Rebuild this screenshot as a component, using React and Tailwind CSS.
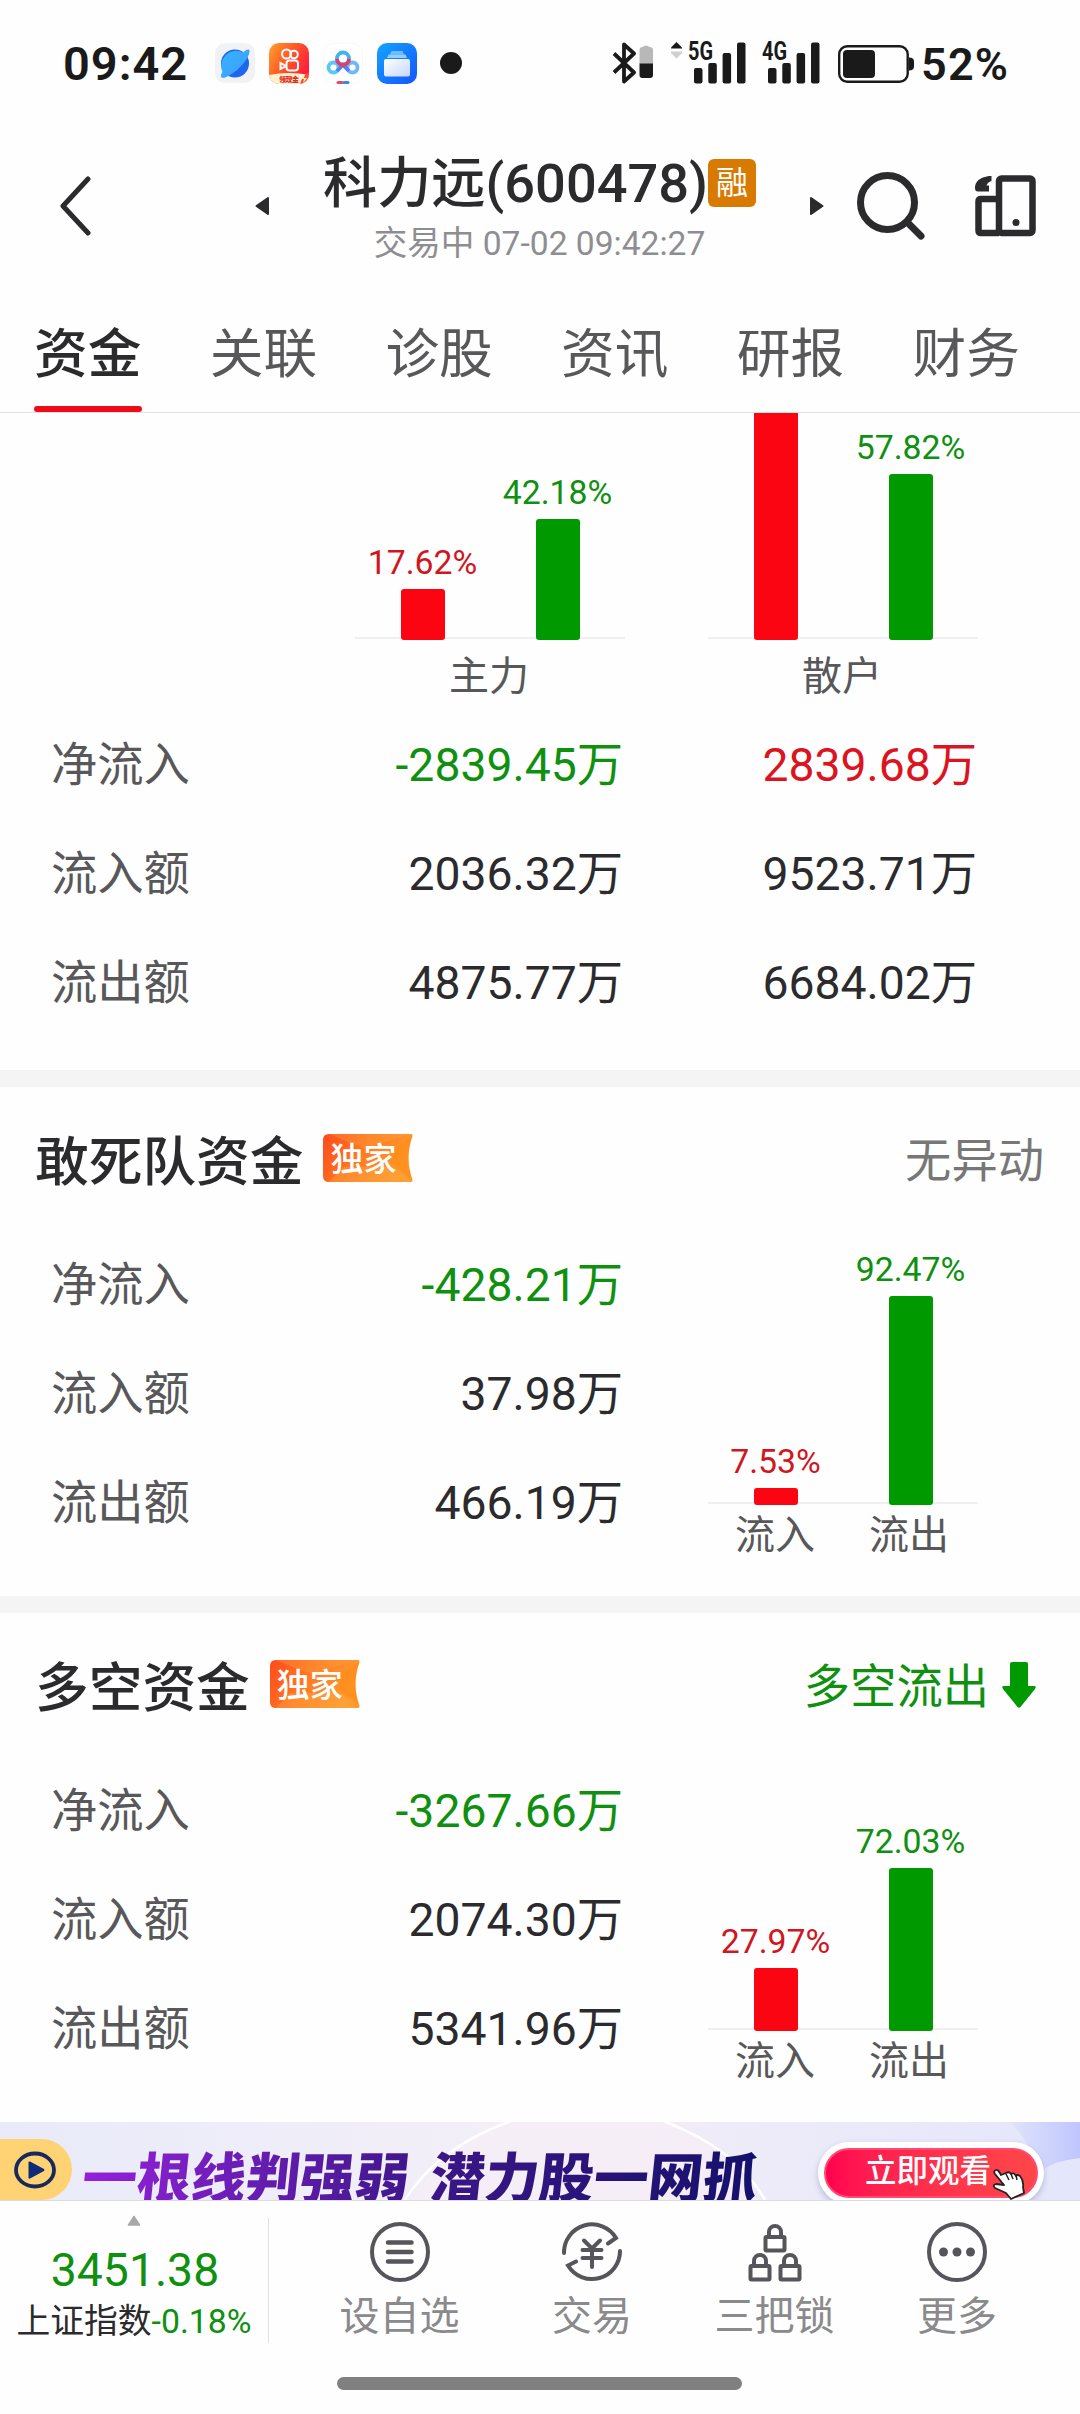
import clsx from "clsx";

const tabs = ["资金", "关联", "诊股", "资讯", "研报", "财务"];

const mainRows = [
  { label: "净流入", main: "-2839.45万", retail: "2839.68万" },
  { label: "流入额", main: "2036.32万", retail: "9523.71万" },
  { label: "流出额", main: "4875.77万", retail: "6684.02万" },
];

const squadRows = [
  { label: "净流入", value: "-428.21万" },
  { label: "流入额", value: "37.98万" },
  { label: "流出额", value: "466.19万" },
];

const longShortRows = [
  { label: "净流入", value: "-3267.66万" },
  { label: "流入额", value: "2074.30万" },
  { label: "流出额", value: "5341.96万" },
];

const SignalBars = ({ x }) => (
  <g fill="#1a1a1a">
    <rect x={x} y="26" width="8.5" height="15.5" rx="2" />
    <rect x={x + 14.3} y="21" width="8.5" height="20.5" rx="2" />
    <rect x={x + 28.6} y="11" width="8.5" height="30.5" rx="2" />
    <rect x={x + 43} y="0.5" width="8.5" height="41" rx="2" />
  </g>
);

const StatusBar = () => {
  return (
    <div className="h-[126px] flex items-center pl-[63px] text-[#1a1a1a] font-semibold">
      <span className="w-[152px] text-[47px] leading-none tracking-[1px]">09:42</span>
      <div className="flex items-center gap-[14px]">
        {/* browser */}
        <svg width="40" height="40" viewBox="0 0 40 40">
          <defs>
            <linearGradient id="planet" x1="0" y1="0" x2="1" y2="1">
              <stop offset="0" stopColor="#35b4ff" />
              <stop offset="1" stopColor="#3f9bff" />
            </linearGradient>
          </defs>
          <rect width="40" height="40" rx="10" fill="#f1f2f4" />
          <circle cx="20" cy="20.500" r="14" fill="#1f66ee" />
          <path
            d="M28 9.500C31 7 34 5.500 34.500 7.500C35 12 30 20 22 27c-6 5-13 9-15.500 7.500C5.500 33 6 31 7.500 29A15 15 0 0 1 28 9.500Z"
            fill="url(#planet)"
          />
        </svg>
        {/* short video */}
        <svg width="40" height="41" viewBox="0 0 40 41">
          <defs>
            <linearGradient id="ks" x1="0" y1="0" x2="1" y2="0.6">
              <stop offset="0" stopColor="#ffa22a" />
              <stop offset="0.5" stopColor="#ff5a26" />
              <stop offset="1" stopColor="#ff1c3c" />
            </linearGradient>
            <clipPath id="ksClip">
              <rect width="40" height="41" rx="10" />
            </clipPath>
          </defs>
          <g clipPath="url(#ksClip)">
            <rect width="40" height="41" fill="url(#ks)" />
            <path d="M0 32Q20 28 40 32V41H0Z" fill="#fff0cf" />
            <path d="M40 29V41H31Q33 33 40 29Z" fill="#ff4a28" />
          </g>
          <g fill="none" stroke="#fff" strokeWidth="2">
            <circle cx="17.500" cy="11" r="4.500" />
            <circle cx="25" cy="11.500" r="3.800" />
            <rect x="17.500" y="17.500" width="11.500" height="10" rx="3" />
            <path d="M11.500 20v6l5-2.500v-1Z" />
          </g>
          <text x="10" y="38.500" fontSize="7" fontWeight="900" fill="#e02a1a" textLength="20">
            领现金
          </text>
          <path d="M36 31l-4 5h3l-1 4 4-5h-3Z" fill="#fff3b0" />
        </svg>
        {/* cloud drive */}
        <svg width="40" height="41" viewBox="0 0 40 41" fill="none" strokeWidth="3.800">
          <rect x="0.500" y="0.500" width="39" height="40" rx="10" fill="#fff" stroke="#f8f8f8" strokeWidth="1" />
          <circle cx="10.500" cy="24.500" r="5" stroke="#58c8f5" />
          <circle cx="29.500" cy="24.500" r="5" stroke="#72b6f6" />
          <path d="M14 28l6-6 6 6" stroke="#4a86ee" />
          <circle cx="20" cy="15.500" r="6" stroke="#3db4f0" />
          <path d="M14 16a6 6 0 0 0 12 0" stroke="#e83a6c" />
          <rect x="13.500" y="38" width="7" height="3" rx="1.500" fill="#e84a60" />
          <rect x="19.500" y="38" width="7" height="3" rx="1.500" fill="#3a8ae0" />
        </svg>
        {/* wallet */}
        <svg width="40" height="41" viewBox="0 0 40 41">
          <defs>
            <linearGradient id="wal" x1="0" y1="0" x2="1" y2="1">
              <stop offset="0" stopColor="#12a4ff" />
              <stop offset="1" stopColor="#1554ff" />
            </linearGradient>
            <linearGradient id="card" x1="0" y1="0" x2="1" y2="1">
              <stop offset="0" stopColor="#fff" />
              <stop offset="1" stopColor="#c8d6ff" />
            </linearGradient>
          </defs>
          <rect width="40" height="41" rx="10" fill="url(#wal)" />
          <path d="M14.500 8h11l1.500 3.500H13Z" fill="#6cc0ff" />
          <path d="M11.500 11.500h17l1.500 3.500H10Z" fill="#92ceff" />
          <rect x="7" y="16" width="26" height="17.500" rx="2" fill="url(#card)" />
        </svg>
      </div>
      <div className="ml-[23px] w-[22px] h-[22px] rounded-full bg-[#1a1a1a]" />

      {/* bluetooth with device battery */}
      <svg className="ml-[150px]" width="42" height="42" viewBox="0 0 42 42">
        <path
          d="M2 11.500 22 30.500 12 39.500V2.500L22 11.500 2 30.500"
          fill="none"
          stroke="#1a1a1a"
          strokeWidth="3.800"
          strokeLinejoin="round"
        />
        <path d="M27.500 8q0-3 3-3l2-1.200h3l2 1.200q3.500 0 3.500 3v14H27.500Z" fill="#b8b8b8" />
        <path d="M27.500 21.500H41V33q0 3-3 3h-7.500q-3 0-3-3Z" fill="#1a1a1a" />
      </svg>
      <svg className="ml-[16px] overflow-visible" width="76" height="42" viewBox="0 0 76 42">
        <path d="M6.500 0 12 5.500V6.500H1V5.500Z" fill="#1a1a1a" />
        <path d="M6.500 16.500 12 11V9.500H1V11Z" fill="#cfcfcf" />
        <text x="18" y="17.800" fontSize="25" fontWeight="700" fill="#1a1a1a" textLength="25" lengthAdjust="spacingAndGlyphs">
          5G
        </text>
        <SignalBars x={24} />
      </svg>
      <svg className="ml-[15px] overflow-visible" width="60" height="42" viewBox="0 0 60 42">
        <text x="1" y="17.800" fontSize="25" fontWeight="700" fill="#1a1a1a" textLength="25" lengthAdjust="spacingAndGlyphs">
          4G
        </text>
        <SignalBars x={7} />
      </svg>
      <svg className="ml-[17px] mt-[2px]" width="76" height="38" viewBox="0 0 76 38">
        <rect x="1.200" y="1.200" width="68.500" height="35.500" rx="8" fill="none" stroke="#1a1a1a" strokeWidth="2.400" />
        <rect x="5" y="5" width="32" height="28" rx="4" fill="#1a1a1a" />
        <path d="M71 12.500q5 0 5 4v5q0 4-5 4Z" fill="#1a1a1a" />
      </svg>
      <span className="ml-[7px] mt-[2px] text-[45px] leading-none tracking-[1.2px]">52%</span>
    </div>
  );
};

const Header = () => {
  return (
    <div className="h-[159px] flex items-center text-[#2b2b2d]">
      <svg className="ml-[59px]" width="32" height="60" viewBox="0 0 32 60">
        <path d="M29 3 4 30 29 57" fill="none" stroke="currentColor" strokeWidth="5" strokeLinecap="round" strokeLinejoin="round" />
      </svg>
      <svg className="ml-[164px]" width="14" height="20" viewBox="0 0 14 20">
        <path d="M13 2v16L1.500 10Z" fill="currentColor" stroke="currentColor" strokeWidth="2" strokeLinejoin="round" />
      </svg>
      <div className="w-[541px] h-full pt-[27px]">
        <div className="h-[61px] flex items-center justify-center">
          <span className="text-[54.2px] leading-[60px] font-medium">科力远(600478)</span>
          <span className="-mt-[2px] w-[48px] h-[48px] rounded-[6px] bg-[#d87a00] text-white text-[32px] leading-[49px] text-center">
            融
          </span>
        </div>
        <div className="text-[33.6px] leading-[60px] text-center text-[#8e8e92]">
          交易中 07-02 09:42:27
        </div>
      </div>
      <svg width="14" height="20" viewBox="0 0 14 20">
        <path d="M1 2v16L12.500 10Z" fill="currentColor" stroke="currentColor" strokeWidth="2" strokeLinejoin="round" />
      </svg>
      <svg className="ml-[33px]" width="68" height="68" viewBox="0 0 68 68" fill="none" stroke="currentColor" strokeWidth="7">
        <circle cx="30.500" cy="30.500" r="27" />
        <path d="M51 51 64 64" strokeLinecap="round" />
      </svg>
      <svg className="ml-[50px]" width="62" height="62" viewBox="0 0 62 62" fill="none" stroke="currentColor" strokeWidth="6.500">
        <rect x="24" y="3.500" width="33.500" height="54.500" rx="2.500" />
        <path d="M24 24H6q-2.500 0-2.500 2.500V55.500q0 2.500 2.500 2.500H24" />
        <circle cx="41" cy="47.500" r="3.500" fill="currentColor" stroke="none" />
        <path d="M14 1h2.500v5q-4 1-5 4.500h2.500v6H3q-3 0-3-3.500Q0 3 14 1Z" fill="currentColor" stroke="none" />
      </svg>
    </div>
  );
};

const Bar = ({ percent, scale, up, bare }) => (
  <div className="flex flex-col items-center justify-end">
    {!bare && (
      <span
        className={clsx(
          "text-[33.8px] leading-[34px] mb-[9px] whitespace-nowrap",
          up ? "text-[#d0161f]" : "text-[#0f900f]"
        )}
      >
        {percent.toFixed(2)}%
      </span>
    )}
    <div
      className={clsx("w-[44px] rounded-[3px] shrink-0", up ? "bg-[#fa0511]" : "bg-[#009900]")}
      style={{ height: Math.round(percent * scale) }}
    />
  </div>
);

// tall bars run out of the top edge, so the pair hangs from its base line
const BarPair = ({ inflow, outflow, scale, bare, className }) => (
  <div className={clsx("w-[270px] relative flex items-end overflow-hidden", className)}>
    <div className="absolute bottom-px w-full h-[2px] bg-[#efefef]" />
    <div className="relative w-full grid grid-cols-2">
      <Bar percent={inflow} scale={scale} up bare={bare} />
      <Bar percent={outflow} scale={scale} />
    </div>
  </div>
);

const MainFunds = () => {
  return (
    <section className="h-[657px]">
      <div className="flex pl-[355px] gap-[83px]">
        <div>
          <BarPair inflow={17.62} outflow={42.18} scale={2.87} className="h-[227px]" />
          <div className="h-[71px] pt-[3px] pr-[2px] text-center text-[40px] leading-[68px] text-[#58585a]">主力</div>
        </div>
        <div>
          <BarPair inflow={82.38} outflow={57.82} scale={2.87} bare className="h-[227px]" />
          <div className="h-[71px] pt-[3px] pr-[2px] text-center text-[40px] leading-[68px] text-[#58585a]">散户</div>
        </div>
      </div>
      {mainRows.map((row, i) => (
        <div key={row.label} className="flex pl-[51px] text-[46.3px] leading-[109px] text-[#2b2b2d]">
          <span className="w-[141px] text-[#58585a]">{row.label}</span>
          <span className={clsx("w-[431px] text-right", i === 0 && "text-[#0f900f]")}>{row.main}</span>
          <span className={clsx("w-[354px] text-right", i === 0 && "text-[#dc141f]")}>{row.retail}</span>
        </div>
      ))}
    </section>
  );
};

const ExclusiveTag = () => (
  <div className="relative ml-[20px] -mt-[9px] w-[90px] h-[48px]">
    <svg className="absolute inset-0" width="90" height="48" viewBox="0 0 90 48">
      <defs>
        <linearGradient id="tag" x1="0" y1="0" x2="1" y2="0.3">
          <stop offset="0" stopColor="#ff4a1c" />
          <stop offset="0.5" stopColor="#ff7a22" />
          <stop offset="1" stopColor="#ff9a2e" />
        </linearGradient>
      </defs>
      <path d="M6 0H88q2 0 1.500 2-8 22 0 44 .5 2-1.500 2H6q-6 0-6-6V6Q0 0 6 0Z" fill="url(#tag)" />
      <path d="M6 0H88L62 8 45 16 30 10Z" fill="#ffa040" opacity="0.350" />
      <path d="M89.500 2q-8 22 0 44L70 30V16Z" fill="#ff8a10" opacity="0.500" />
      <path d="M6 48H88L70 33H20Z" fill="#ffab48" opacity="0.350" />
    </svg>
    <span className="relative block pl-[7px] text-[33px] leading-[51px] font-medium text-white">独家</span>
  </div>
);

const FundSection = ({ title, status, rows, inflow, outflow }) => {
  return (
    <section className="border-t-[17px] border-[#f4f4f4] h-[526px]">
      <div className="h-[143px] pt-[8px] pl-[35px] pr-[36px] flex items-center">
        <h2 className="text-[53.7px] leading-[56px] font-medium text-[#2b2b2d]">{title}</h2>
        <ExclusiveTag />
        <div className="ml-auto -mt-[2px] text-[46.3px] leading-none">{status}</div>
      </div>
      <div className="flex pl-[51px]">
        <div className="w-[572px] pt-px text-[46.3px] leading-[109px] text-[#2b2b2d]">
          {rows.map((row, i) => (
            <div key={row.label} className="flex justify-between">
              <span className="text-[#58585a]">{row.label}</span>
              <span className={clsx(i === 0 && "text-[#0f900f]")}>{row.value}</span>
            </div>
          ))}
        </div>
        <div className="ml-[85px]">
          <BarPair inflow={inflow} outflow={outflow} scale={2.26} className="h-[275px]" />
          <div className="grid grid-cols-2 pt-[10px] pr-[2px] text-center text-[40px] leading-[42px] text-[#58585a]">
            <span>流入</span>
            <span>流出</span>
          </div>
        </div>
      </div>
    </section>
  );
};

const PromoBanner = () => {
  return (
    <div className="relative h-[79px] border-b border-[#dcdcde] overflow-hidden flex bg-linear-to-r from-[#e9ebfa] via-[#f4eff7] to-[#e4e6fb]">
      <svg className="absolute inset-0" width="1080" height="78" viewBox="0 0 1080 78" fill="none">
        <defs>
          <linearGradient id="swoosh" x1="0" y1="0" x2="1" y2="0">
            <stop offset="0" stopColor="#dfe3fc" />
            <stop offset="1" stopColor="#c0c6fd" />
          </linearGradient>
        </defs>
        <circle cx="585" cy="180" r="200" fill="#f7eef5" opacity="0.700" />
        <path d="M405 78Q440 22 520 -4M655 -4Q735 24 765 78" stroke="#fff" strokeWidth="2.500" />
        <path d="M1010 0H1080V36Q1055 38 1040 50 1030 20 1010 0Z" fill="url(#swoosh)" />
      </svg>
      <div className="relative mt-[17px] w-[72px] h-[61px] rounded-r-full bg-[#ffd374] flex items-center pl-[14px]">
        <svg width="42" height="38" viewBox="0 0 42 38">
          <ellipse cx="21" cy="19" rx="19" ry="16.500" fill="none" stroke="#16295c" strokeWidth="3.800" />
          <path d="M14.500 11.500v15q0 1.500 1.500 1L30 20q1-1 0-2L16 10.500q-1.500-.5-1.500 1Z" fill="#0f2a78" />
        </svg>
      </div>
      <div className="relative ml-[10px] mt-[22px] h-[80px] w-[690px] whitespace-nowrap text-[54.500px] leading-[70px] font-black text-transparent bg-clip-text bg-linear-to-r from-[#9420dc] via-[#3c1688] to-[#12106a] -skew-x-6">
        一根线判强弱<span className="inline-block w-[21px]" />潜力股一网抓
      </div>
      <div className="absolute left-[818px] top-[20px] w-[226px] h-[62px] rounded-full bg-white p-[6px] shadow-[0_3px_6px_#b8b8d8]">
        <div className="h-[50px] rounded-full border-2 border-[#ff4a72] bg-linear-to-r from-[#ff0050] to-[#ff4648] pl-[39px] text-[31.500px] leading-[43px] font-medium text-white">
          立即观看
        </div>
        <svg className="absolute left-[174px] top-[26px]" width="36" height="34" viewBox="0 0 36 34">
          <path
            d="M4 2q-3 1-1 4l9 11-8-1q-4 1-1 4l11 5 5 6 13-6-1-6q1-6-3-11-3-2-4 0-2-4-5-2-2-3-5-1L9 7Q6 1 4 2Z"
            fill="#fff"
            stroke="#222"
            strokeWidth="1.800"
            strokeLinejoin="round"
          />
          <path d="M14 6l3 6M19 6l2 5M24 7l1 5" stroke="#222" strokeWidth="1.500" />
        </svg>
      </div>
    </div>
  );
};

const Lock = ({ x, y }) => (
  <g transform={`translate(${x} ${y})`}>
    <rect x="2" y="13" width="19" height="13.500" rx="1" />
    <path d="M5.500 13V8a6 6 0 0 1 12 0V13" />
  </g>
);

const actions = [
  {
    label: "设自选",
    width: "w-[193px]",
    icon: (
      <>
        <circle cx="30" cy="30" r="28" />
        <path d="M18 20.500H41.500M18 30H41.500M18 39.500H41.500" strokeWidth="4.500" />
      </>
    ),
  },
  {
    label: "交易",
    width: "w-[192px]",
    icon: (
      <>
        <path d="M2 31A28 28 0 0 1 54 16L46 21.500" />
        <path d="M58 29A28 28 0 0 1 6 43.500L14 39.500" />
        <path d="M22 18.500 30 26.500 38 18.500M30 26.500V45M20.500 28H39.500M20.500 36H39.500" />
      </>
    ),
  },
  {
    label: "三把锁",
    width: "w-[173px]",
    icon: (
      <>
        <Lock x={18.500} y={2} />
        <Lock x={3.500} y={31} />
        <Lock x={33.500} y={31} />
      </>
    ),
  },
  {
    label: "更多",
    width: "w-[192px]",
    icon: (
      <>
        <circle cx="30" cy="30" r="28" />
        <g fill="currentColor" stroke="none">
          <circle cx="16.500" cy="30" r="4.500" />
          <circle cx="30" cy="30" r="4.500" />
          <circle cx="43.500" cy="30" r="4.500" />
        </g>
      </>
    ),
  },
];

const BottomBar = () => {
  return (
    <div className="h-[213px]">
      <div className="flex h-[176px]">
        <div className="w-[268px] flex flex-col items-center pt-[14px]">
          <svg width="14" height="11" viewBox="0 0 14 11">
            <path d="M7 1.500 12.500 10H1.500Z" fill="#a8a8aa" stroke="#a8a8aa" strokeWidth="1.500" strokeLinejoin="round" />
          </svg>
          <div className="mt-[17px] pl-[2px] text-[46.3px] leading-[54px] text-[#0f900f]">3451.38</div>
          <div className="mt-px text-[33.8px] leading-[48px] text-[#2b2b2d]">
            上证指数<span className="text-[#0f900f]">-0.18%</span>
          </div>
        </div>
        <div className="mt-[17px] w-px h-[125px] bg-[#e0e0e0]" />
        <div className="flex pl-[34px]">
          {actions.map((a) => (
            <div key={a.label} className={clsx("flex flex-col items-center pt-[21px]", a.width)}>
              <svg
                width="60"
                height="60"
                viewBox="0 0 60 60"
                fill="none"
                stroke="currentColor"
                strokeWidth="4"
                strokeLinecap="round"
                className="text-[#55555b]"
              >
                {a.icon}
              </svg>
              <span className="mt-[10px] text-[40px] leading-[50px] text-[#8a8a8d]">{a.label}</span>
            </div>
          ))}
        </div>
      </div>
      <div className="ml-[337px] w-[405px] h-[13px] rounded-full bg-[#808080]" />
    </div>
  );
};

const App = () => {
  return (
    <div className="w-[1080px] h-[2414px] overflow-hidden bg-[#fefefe] font-['Roboto','Noto_Sans_CJK_SC',sans-serif]">
      <StatusBar />
      <Header />
      <nav className="h-[128px] border-b border-[#e2e2e2] flex gap-[67.7px] pl-[34px] text-[53.7px] text-[#58585a]">
        {tabs.map((tab, i) => (
          <div
            key={tab}
            className={clsx("relative w-[108px] shrink-0 pt-[13px] leading-[113px]", i === 0 && "font-medium text-[#2b2b2d]")}
          >
            {tab}
            {i === 0 && <div className="absolute bottom-0 w-full h-[6px] rounded-full bg-[#ee0a18]" />}
          </div>
        ))}
      </nav>
      <MainFunds />
      <FundSection
        title="敢死队资金"
        status={<span className="text-[#777]">无异动</span>}
        rows={squadRows}
        inflow={7.53}
        outflow={92.47}
      />
      <FundSection
        title="多空资金"
        status={
          <span className="flex items-center text-[#0f900f] pr-[8px]">
            多空流出
            <svg className="ml-[13px] -mt-[4px]" width="34" height="46" viewBox="0 0 34 46">
              <path d="M10 0H24q2 0 2 2V24h6q3 0 1 3L18.500 45q-1.500 1.500-3 0L1 27q-2-3 1-3H8V2q0-2 2-2Z" fill="#009900" />
            </svg>
          </span>
        }
        rows={longShortRows}
        inflow={27.97}
        outflow={72.03}
      />
      <PromoBanner />
      <BottomBar />
    </div>
  );
};

export default App;
